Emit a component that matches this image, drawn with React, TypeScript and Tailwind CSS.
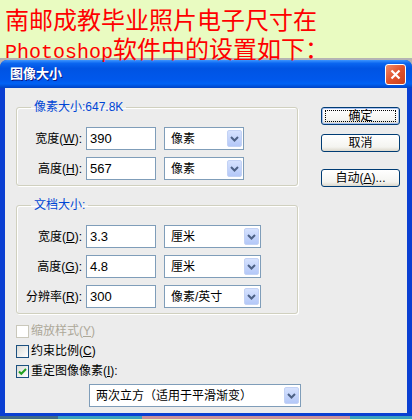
import type { ReactNode } from "react"

const ui = "font-['Liberation_Sans','Noto_Sans_CJK_SC',sans-serif]"

function Chevron() {
  return (
    <svg width="9" height="6" viewBox="0 0 9 6">
      <path d="M1 1l3.5 3.5L8 1" fill="none" stroke="#4d6185" strokeWidth="2" />
    </svg>
  )
}

function DropButton() {
  return (
    <div className="mr-px flex h-[17px] w-[15px] items-center justify-center rounded-[2px] border border-[#c3d2f5] bg-[linear-gradient(to_bottom,#d6e2fe,#b4c8f8)]">
      <Chevron />
    </div>
  )
}

function Select({ value, className }: { value: string; className: string }) {
  return (
    <div className={`flex h-[23px] items-center border border-[#7f9db9] bg-white ${className}`}>
      <span className="flex-1 pl-[6px] text-[12px] whitespace-nowrap">{value}</span>
      <DropButton />
    </div>
  )
}

function Field({ value }: { value: string }) {
  return (
    <div className="flex h-[23px] w-[70px] items-center border border-[#7f9db9] bg-white pl-[3px] text-[13px]">
      {value}
    </div>
  )
}

function Row({ label, value, unit, wide }: { label: ReactNode; value: string; unit: string; wide?: boolean }) {
  return (
    <div className="flex items-center">
      <div className="w-[65px] text-right text-[12px] whitespace-nowrap">{label}</div>
      <div className="ml-[4px]">
        <Field value={value} />
      </div>
      <div className="ml-[8px]">
        <Select value={unit} className={wide ? "w-[97px]" : "w-[80px]"} />
      </div>
    </div>
  )
}

function Group({ title, children }: { title: string; children: ReactNode }) {
  return (
    <fieldset className="w-[282px] rounded-[3px] border border-[#d0d0bf] pb-[5px] shadow-[inset_1px_1px_0_#ffffff,1px_1px_0_#ffffff]">
      <legend className="ml-[14px] px-[3px] text-[12px] leading-[14px] text-[#0046d5]">{title}</legend>
      <div className="flex flex-col gap-[7px] pt-[13px]">{children}</div>
    </fieldset>
  )
}

function Check({ label, checked, disabled }: { label: ReactNode; checked?: boolean; disabled?: boolean }) {
  return (
    <div className="flex h-[20px] items-center">
      <div
        className={
          disabled
            ? "flex h-[13px] w-[13px] items-center justify-center border border-[#cac8bb] bg-white"
            : "flex h-[13px] w-[13px] items-center justify-center border border-[#1c5180] bg-[linear-gradient(135deg,#dcdcd7,#ffffff)]"
        }
      >
        {checked && (
          <svg width="9" height="9" viewBox="0 0 9 9">
            <path d="M1 4.5l2.3 2.3L8 2" fill="none" stroke="#21a121" strokeWidth="2" />
          </svg>
        )}
      </div>
      <span className={`ml-[2px] text-[12px] ${disabled ? "text-[#aca899]" : ""}`}>{label}</span>
    </div>
  )
}

function Button({ children, isDefault }: { children: ReactNode; isDefault?: boolean }) {
  return (
    <button
      className={`flex h-[18px] w-[79px] items-center justify-center rounded-[3px] border border-[#003c74] bg-[linear-gradient(to_bottom,#ffffff,#f4f4f0_75%,#dcd8cc)] text-[12px] leading-none ${
        isDefault ? "shadow-[inset_0_0_0_1px_#a8c0f0]" : ""
      }`}
    >
      {isDefault ? (
        <span className="flex h-[12px] w-[71px] items-center justify-center border border-dotted border-black">
          {children}
        </span>
      ) : (
        children
      )}
    </button>
  )
}

export default function App() {
  return (
    <div className={`h-[420px] w-[412px] overflow-hidden bg-[#e9fbc1] ${ui}`}>
      {/* caption */}
      <div className="h-[58px] pl-[5px] pt-[4px] text-[24px] leading-[29px] text-[#ff0000] font-['Noto_Sans_CJK_SC',sans-serif]">
        <div className="h-[29px]">南邮成教毕业照片电子尺寸在</div>
        <div className="h-[25px] whitespace-nowrap">
          <span className="text-[20px] font-['Liberation_Mono',monospace]">Photoshop</span>
          <span>软件中的设置如下：</span>
        </div>
      </div>

      <div className="bg-[#b4b4b4] pt-[2px]">
        <div className="rounded-t-[7px] bg-[#0a3fd2] pb-[3px]">
          {/* title bar */}
          <div className="flex h-[28px] items-center justify-between rounded-t-[7px] bg-[linear-gradient(to_bottom,#3d95ff_0%,#0a66f0_12%,#0054e3_30%,#0058ec_70%,#0062f4_85%,#0043c4_100%)] pl-[10px] pr-[6px]">
            <span className="text-[13px] font-bold text-white [text-shadow:1px_1px_#0a1883]">图像大小</span>
            <div className="flex h-[21px] w-[21px] items-center justify-center rounded-[3px] border border-white bg-[linear-gradient(135deg,#f08c6c,#e0522c_50%,#c8401c)]">
              <svg width="11" height="11" viewBox="0 0 11 11">
                <path d="M1.5 1.5l8 8M9.5 1.5l-8 8" stroke="white" strokeWidth="2.2" />
              </svg>
            </div>
          </div>

          {/* body */}
          <div className="mx-[5px] flex bg-[#ececec] pb-[6px] pl-[11px] pt-[12px] text-black">
            <div className="flex flex-col">
              <Group title="像素大小:647.8K">
                <Row label={<>宽度(<u>W</u>):</>} value="390" unit="像素" />
                <Row label={<>高度(<u>H</u>):</>} value="567" unit="像素" />
              </Group>
              <div className="mt-[12px]">
                <Group title="文档大小:">
                  <Row label={<>宽度(<u>D</u>):</>} value="3.3" unit="厘米" wide />
                  <Row label={<>高度(<u>G</u>):</>} value="4.8" unit="厘米" wide />
                  <Row label={<>分辨率(<u>R</u>):</>} value="300" unit="像素/英寸" wide />
                </Group>
              </div>
              <div className="mt-[7px] flex flex-col">
                <Check label={<>缩放样式(<u>Y</u>)</>} disabled />
                <Check label={<>约束比例(<u>C</u>)</>} />
                <Check label={<>重定图像像素(<u>I</u>):</>} checked />
              </div>
              <div className="ml-[73px] mt-[3px]">
                <Select value="两次立方（适用于平滑渐变）" className="h-[22px] w-[212px]" />
              </div>
            </div>

            <div className="ml-[20px] flex flex-col pt-[7px]">
              <Button isDefault>确定</Button>
              <div className="mt-[9px]">
                <Button>取消</Button>
              </div>
              <div className="mt-[17px]">
                <Button>
                  自动(<u>A</u>)...
                </Button>
              </div>
            </div>
          </div>
        </div>
      </div>

      {/* strip of the picture below the dialog */}
      <div className="flex h-[3px]">
        <div className="w-[58px] bg-[#3e6a8a]" />
        <div className="w-[84px] bg-[#3aa0c0]" />
        <div className="w-[208px] bg-[#c89098]" />
        <div className="flex-1 bg-[#3aa0c0]" />
      </div>
    </div>
  )
}
